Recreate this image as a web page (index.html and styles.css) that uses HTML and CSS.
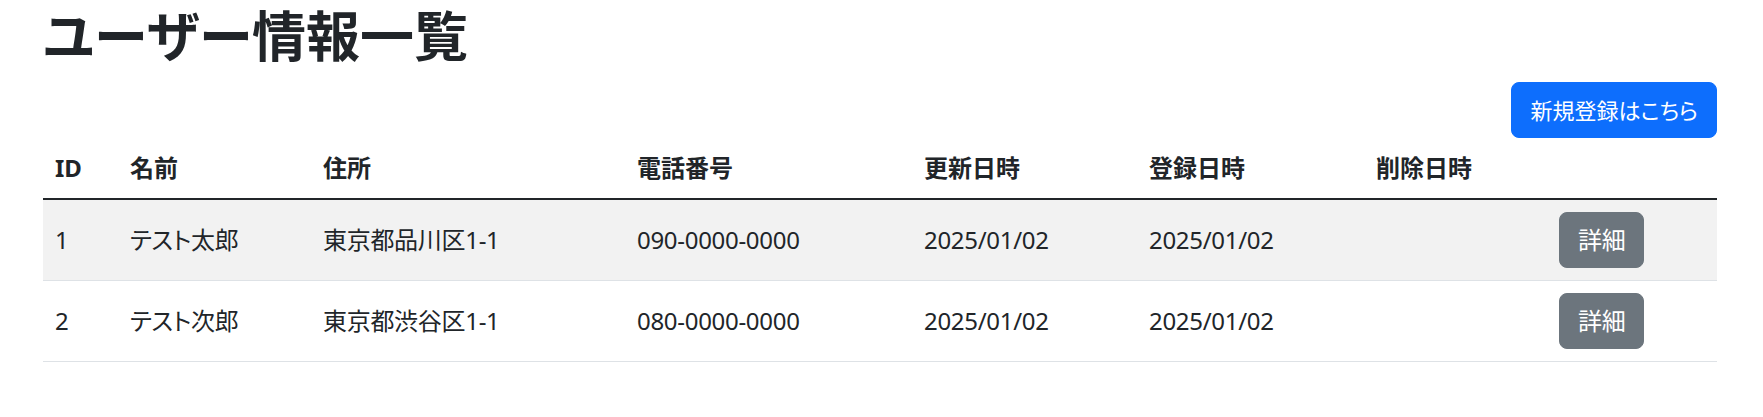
FILE: index.html
```html
<!DOCTYPE html>
<html lang="ja">
<head>
<meta charset="utf-8">
<title>ユーザー情報一覧</title>
<link rel="stylesheet" href="styles.css">
</head>
<body>
<main class="page">
  <h1 class="title">ユーザー情報一覧</h1>
  <div class="toolbar">
    <a class="btn btn-primary" href="#">新規登録はこちら</a>
  </div>
  <table class="users">
    <colgroup>
      <col class="c-id"><col class="c-name"><col class="c-addr"><col class="c-tel">
      <col class="c-upd"><col class="c-reg"><col class="c-del"><col class="c-act">
    </colgroup>
    <thead>
      <tr>
        <th>ID</th><th>名前</th><th>住所</th><th>電話番号</th>
        <th>更新日時</th><th>登録日時</th><th>削除日時</th><th></th>
      </tr>
    </thead>
    <tbody>
      <tr class="striped">
        <td>1</td><td>テスト太郎</td><td>東京都品川区1-1</td><td>090-0000-0000</td>
        <td>2025/01/02</td><td>2025/01/02</td><td></td>
        <td><a class="btn btn-secondary" href="#">詳細</a></td>
      </tr>
      <tr>
        <td>2</td><td>テスト次郎</td><td>東京都渋谷区1-1</td><td>080-0000-0000</td>
        <td>2025/01/02</td><td>2025/01/02</td><td></td>
        <td><a class="btn btn-secondary" href="#">詳細</a></td>
      </tr>
    </tbody>
  </table>
</main>
</body>
</html>
```
FILE: styles.css
```css
html, body {
  margin: 0;
  padding: 0;
  background: #fff;
}
body {
  font-family: "Noto Sans", "Noto Sans CJK JP", sans-serif;
  font-size: 24px;
  line-height: 36px;
  color: #212529;
  font-feature-settings: "palt";
}
.page {
  padding: 0 46px 0 43px;
}
.title {
  margin: 0 0 10px 0;
  font-size: 54px;
  line-height: 72px;
  font-weight: 700;
}
.toolbar {
  display: flex;
  justify-content: flex-end;
}
.btn {
  display: inline-block;
  padding: 9px 18px;
  border: 1px solid transparent;
  border-radius: 8px;
  font-size: 24px;
  line-height: 36px;
  color: #fff;
  text-decoration: none;
  font-weight: 400;
}
.btn-primary {
  font-size: 22px;
  background: #0d6efd;
  border-color: #0d6efd;
}
.btn-secondary {
  background: #6c757d;
  border-color: #6c757d;
}
.users {
  width: 100%;
  border-collapse: collapse;
  table-layout: fixed;
}
.c-id { width: 75px; }
.c-name { width: 193px; }
.c-addr { width: 314px; }
.c-tel { width: 287px; }
.c-upd { width: 225px; }
.c-reg { width: 227px; }
.c-del { width: 183px; }
.c-act { width: 170px; }
.users th {
  text-align: left;
  font-weight: 700;
  padding: 12px;
  vertical-align: bottom;
  border-bottom: 2px solid #212529;
}
.users td {
  padding: 12px;
  vertical-align: middle;
  border-bottom: 1px solid #dee2e6;
  white-space: nowrap;
  letter-spacing: -0.3px;
}
.users tr.striped td {
  background: #f2f2f2;
}
```
